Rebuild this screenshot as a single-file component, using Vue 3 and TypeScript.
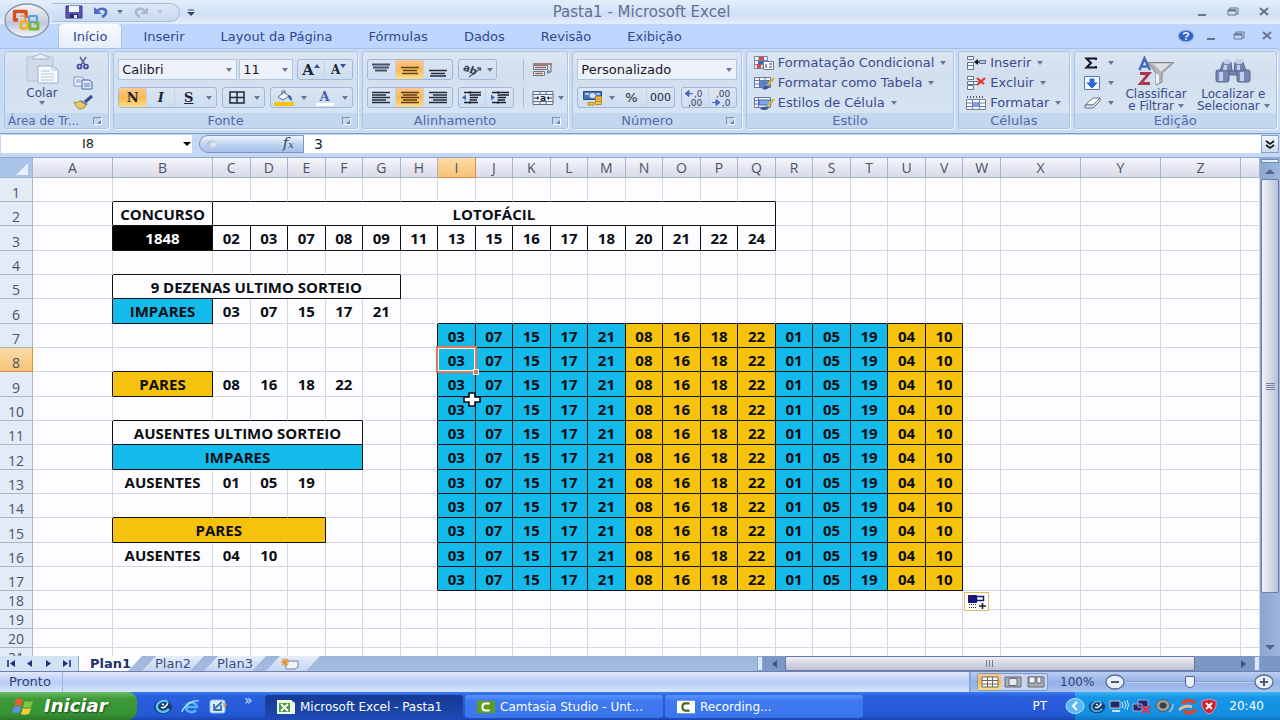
<script setup lang="ts">
import { ref } from 'vue'

interface Spec {
  text: string
  span?: number
  fill?: string
  boxed?: boolean
}
interface Cell extends Spec {
  col: number
  right: boolean
  bottom: boolean
}

const letters = 'ABCDEFGHIJKLMNOPQRSTUVWXYZ'.split('')
const lastCol = 26
const rowCount = 21
const specs = new Map<string, Spec>()
const put = (row: number, col: number, spec: Spec) => specs.set(`${row}:${col}`, spec)
const putList = (row: number, col: number, values: string, extra: Partial<Spec> = {}) =>
  values.split(' ').forEach((text, i) => put(row, col + i, { text, ...extra }))

put(2, 1, { text: 'CONCURSO', boxed: true })
put(2, 2, { text: 'LOTOFÁCIL', span: 15, boxed: true })
put(3, 1, { text: '1848', boxed: true, fill: 'black' })
putList(3, 2, '02 03 07 08 09 11 13 15 16 17 18 20 21 22 24', { boxed: true })
put(5, 1, { text: '9 DEZENAS ULTIMO SORTEIO', span: 6, boxed: true })
put(6, 1, { text: 'IMPARES', boxed: true, fill: 'cyan' })
putList(6, 2, '03 07 15 17 21')
put(9, 1, { text: 'PARES', boxed: true, fill: 'gold' })
putList(9, 2, '08 16 18 22')
put(11, 1, { text: 'AUSENTES ULTIMO SORTEIO', span: 5, boxed: true })
put(12, 1, { text: 'IMPARES', span: 5, boxed: true, fill: 'cyan' })
put(13, 1, { text: 'AUSENTES' })
putList(13, 2, '01 05 19')
put(15, 1, { text: 'PARES', span: 4, boxed: true, fill: 'gold' })
put(16, 1, { text: 'AUSENTES' })
putList(16, 2, '04 10')
for (let row = 7; row <= 17; row++) {
  putList(row, 8, '03 07 15 17 21', { boxed: true, fill: 'cyan' })
  putList(row, 13, '08 16 18 22', { boxed: true, fill: 'gold' })
  putList(row, 17, '01 05 19', { boxed: true, fill: 'cyan' })
  putList(row, 20, '04 10', { boxed: true, fill: 'gold' })
}

const boxedAt = new Set<string>()
specs.forEach((spec, key) => {
  if (!spec.boxed) return
  const [row, col] = key.split(':').map(Number)
  for (let i = 0; i < (spec.span ?? 1); i++) boxedAt.add(`${row}:${col + i}`)
})

const rows = Array.from({ length: rowCount }, (_, i) => {
  const row = i + 1
  const cells: Cell[] = []
  let col = 0
  while (col <= lastCol) {
    const spec = specs.get(`${row}:${col}`) ?? { text: '' }
    const span = spec.span ?? 1
    cells.push({
      ...spec,
      col,
      right: !!spec.boxed || boxedAt.has(`${row}:${col + span}`),
      bottom: !!spec.boxed || boxedAt.has(`${row + 1}:${col}`),
    })
    col += span
  }
  return { row, cells }
})

const tabs = ['Início', 'Inserir', 'Layout da Página', 'Fórmulas', 'Dados', 'Revisão', 'Exibição']
const nameBox = ref('I8')
const formula = ref('3')
const zoom = ref(50)
</script>

<template>
  <div class="window">
    <header class="titlebar">
      <button class="office" aria-label="Botão Office">
        <svg width="46" height="36" viewBox="0 0 46 36">
          <defs>
            <linearGradient id="orb" x1="0" y1="0" x2="0" y2="1">
              <stop offset="0" stop-color="#f4f6fa" /><stop offset=".5" stop-color="#c9d0df" />
              <stop offset=".55" stop-color="#bcc6d9" /><stop offset="1" stop-color="#f2f6fc" />
            </linearGradient>
          </defs>
          <ellipse cx="22" cy="17.500" rx="22" ry="16.500" fill="url(#orb)" stroke="#8794ad" stroke-width="1.300" />
          <g fill="none">
            <rect x="24" y="13" width="8" height="6" rx="1" stroke="#5aa0dc" stroke-width="2.200" />
            <path d="M13 17H9.500V8.500H21V15" stroke="#d9501c" stroke-width="3.400" stroke-linejoin="round" />
            <path d="M15 13h5v5" stroke="#f08a4a" stroke-width="1.600" />
            <rect x="16" y="18.500" width="7" height="7" rx="1" stroke="#f2b01e" stroke-width="2.600" />
            <path d="M25 20v6h8v-6h-4" stroke="#7cb83c" stroke-width="2.800" stroke-linejoin="round" />
          </g>
        </svg>
      </button>
      <div class="quick">
        <button aria-label="Salvar">
          <svg width="18" height="14" viewBox="0 0 18 14"><path d="M1 1h16v12H1z" fill="#5b54b8" stroke="#36367e" /><path d="M4 1h10v6H4z" fill="#f4f7ff" /><path d="M5 9h8v4H5z" fill="#2d2e66" /><path d="M9 10h3v3H9z" fill="#e8eaf8" /></svg>
        </button>
        <button aria-label="Desfazer">
          <svg width="16" height="13" viewBox="0 0 16 13"><path d="M4 5c4-4 10-2 9 2-.4 2-2 3-4 4" fill="none" stroke="#4a6cc4" stroke-width="2.600" /><path d="M1 1v7h8z" fill="#4a6cc4" /></svg>
        </button>
        <i class="dd"></i>
        <button aria-label="Refazer">
          <svg width="16" height="13" viewBox="0 0 16 13"><path d="M12 5C8 1 2 3 3 7c.4 2 2 3 4 4" fill="none" stroke="#a9b7d2" stroke-width="2.400" /><path d="M15 1v7H7z" fill="#a9b7d2" /></svg>
        </button>
        <i class="dd pale"></i>
      </div>
      <button class="custom" aria-label="Personalizar"><svg width="8" height="7" viewBox="0 0 8 7"><path d="M1 1h6" stroke="#36456b" /><path d="M0 3h8L4 7z" fill="#36456b" /></svg></button>
      <h1>Pasta1 - Microsoft Excel</h1>
      <div class="winbtns">
        <button aria-label="Minimizar"><svg width="12" height="12" viewBox="0 0 12 12"><path d="M2 9h8" stroke="#66748e" stroke-width="2" /></svg></button>
        <button aria-label="Restaurar"><svg width="12" height="12" viewBox="0 0 12 12"><path d="M3 4V2h8v6H9" fill="none" stroke="#66748e" /><path d="M1 4h8v5H1z" fill="none" stroke="#66748e" /><path d="M1 4.500h8" stroke="#66748e" stroke-width="2" /></svg></button>
        <button aria-label="Fechar"><svg width="12" height="12" viewBox="0 0 12 12"><path d="M2 2l8 7M10 2L2 9" stroke="#66748e" stroke-width="2" /></svg></button>
      </div>
    </header>

    <nav class="tabs">
      <button v-for="(tab, i) in tabs" :key="tab" :class="['tab', { on: i === 0 }]">{{ tab }}</button>
      <div class="winbtns doc">
        <button class="help" aria-label="Ajuda"><svg width="18" height="14" viewBox="0 0 18 14"><ellipse cx="9" cy="7" rx="8" ry="6" fill="#2f66cc" stroke="#a7bfe6" stroke-width="1.500" /><path d="M6.500 5.500c0-2.500 5-2.500 5 0 0 1.500-2.500 1.300-2.500 3M9 9.500V11" fill="none" stroke="#fff" stroke-width="1.500" /></svg></button>
        <button aria-label="Minimizar pasta"><svg width="12" height="12" viewBox="0 0 12 12"><path d="M2 9h8" stroke="#66748e" stroke-width="2" /></svg></button>
        <button aria-label="Restaurar pasta"><svg width="12" height="12" viewBox="0 0 12 12"><path d="M3 4V2h8v6H9" fill="none" stroke="#66748e" /><path d="M1 4h8v5H1z" fill="none" stroke="#66748e" /><path d="M1 4.500h8" stroke="#66748e" stroke-width="2" /></svg></button>
        <button aria-label="Fechar pasta"><svg width="12" height="12" viewBox="0 0 12 12"><path d="M2 2l8 7M10 2L2 9" stroke="#66748e" stroke-width="2" /></svg></button>
      </div>
    </nav>

    <section class="ribbon">
      <div class="group">
        <div class="body clip">
          <button class="big">
            <svg width="34" height="30" viewBox="0 0 34 30"><path d="M2 3h26v24H2z" fill="#cfdaea" stroke="#b4c2d9" /><path d="M8 5V2h4l2-2h3l2 2h4v3z" fill="#eef3fa" stroke="#a4b2ca" /><path d="M13 12h14l6 4v13H13z" fill="#f6f9fe" stroke="#9fb0cd" /><path d="M27 12v4h6M16 17h9M16 20h13M16 23h13M16 26h13" fill="none" stroke="#b5c3da" /></svg>
            <span>Colar</span><i class="dd"></i>
          </button>
          <div class="stack">
            <button aria-label="Recortar"><svg width="14" height="14" viewBox="0 0 14 14"><path d="M4 1l5 8M10 1L5 9" stroke="#5b6a92" stroke-width="1.600" /><circle cx="3.500" cy="10.500" r="2" fill="none" stroke="#3c479e" stroke-width="1.700" /><circle cx="10" cy="10.500" r="2" fill="none" stroke="#3c479e" stroke-width="1.700" /></svg></button>
            <button aria-label="Copiar"><svg width="20" height="14" viewBox="0 0 20 14"><path d="M1 1h7l3 2v7H1z" fill="#edf3fd" stroke="#7d93c2" /><path d="M3 4h5M3 6h5" stroke="#7d93c2" /><path d="M9 4h7l3 2v7H9z" fill="#dbe7fb" stroke="#4864ac" /><path d="M11 8h6M11 10h6" stroke="#5c7cc0" /></svg></button>
            <button aria-label="Pincel"><svg width="20" height="14" viewBox="0 0 20 14"><path d="M19 0l-7 6" stroke="#3e4886" stroke-width="3" /><path d="M8 4l7 4-3 2-6-3z" fill="#7680a8" /><path d="M1 6c3 1 4 0 6-1l6 4c-1 3-4 4-7 4-2-2-4-4-5-7z" fill="#e9cc68" stroke="#a58a35" /></svg></button>
          </div>
        </div>
        <footer class="left small">Área de Tr...<i class="launch"></i></footer>
      </div>

      <div class="group">
        <div class="body lines">
          <div class="line">
            <div class="joined">
              <label class="pick family"><select aria-label="Fonte"><option>Calibri</option></select><i class="dd"></i></label>
              <label class="pick size"><select aria-label="Tamanho da fonte"><option>11</option></select><i class="dd"></i></label>
            </div>
            <div class="box two">
              <button aria-label="Aumentar fonte"><b class="serif big-a">A</b><svg width="6" height="14" viewBox="0 0 6 14"><path d="M0 5h6L3 1z" fill="#3d4f98" /></svg></button>
              <button aria-label="Diminuir fonte"><b class="serif small-a">A</b><svg width="6" height="14" viewBox="0 0 6 14"><path d="M0 1h6L3 5z" fill="#3d4f98" /></svg></button>
            </div>
          </div>
          <div class="line">
            <div class="box style">
              <button class="serif lit"><b>N</b></button>
              <button class="serif"><em>I</em></button>
              <button class="serif"><u>S</u></button>
              <i class="dd"></i>
            </div>
            <div class="box pair narrow">
              <button aria-label="Bordas"><svg width="16" height="13" viewBox="0 0 16 13"><path d="M1 1h14v11H1zM8 1v11M1 6.500h14" fill="none" stroke="#20283c" stroke-width="1.500" /></svg></button>
              <i class="dd"></i>
            </div>
            <div class="box colors">
              <button aria-label="Cor de preenchimento"><svg width="20" height="16" viewBox="0 0 20 16"><path d="M4 7l6-5 5 4-6 4z" fill="#f1f5fd" stroke="#5a6c98" /><path d="M8 5V1h3v3" fill="none" stroke="#5a6c98" /><path d="M14 5c3 0 4 2 4 6-2-1-3-2-4-4z" fill="#4763a8" /><path d="M0 12h20v4H0z" fill="#f6c20c" /></svg></button>
              <i class="dd"></i>
              <button class="fontcolor" aria-label="Cor da fonte"><b class="serif">A</b></button>
              <i class="dd"></i>
            </div>
          </div>
        </div>
        <footer>Fonte<i class="launch"></i></footer>
      </div>

      <div class="group">
        <div class="body align">
          <div class="box">
            <button aria-label="Alinhar em cima"><svg width="18" height="14" viewBox="0 0 18 14"><path d="M0 1.500h18M1 4.500h16M3 7.500h12" stroke="#465068" stroke-width="2" /></svg></button>
            <button class="lit" aria-label="Alinhar no meio"><svg width="18" height="14" viewBox="0 0 18 14"><path d="M0 4.500h18M2 7.500h14M1 10.500h16" stroke="#5c4420" stroke-width="1.500" /></svg></button>
            <button aria-label="Alinhar embaixo"><svg width="18" height="14" viewBox="0 0 18 14"><path d="M0 7.500h18M2 10.500h14M1 13h16" stroke="#252c3e" stroke-width="1.500" /></svg></button>
          </div>
          <div class="box pair mid">
            <button aria-label="Orientação"><svg width="20" height="14" viewBox="0 0 20 14"><path d="M6 14L18 5M18 5h-4M18 5l-1 3" fill="none" stroke="#555f78" stroke-width="1.300" /><text x="0" y="9" font-size="10" font-weight="bold" fill="#333c52" transform="rotate(22 5 7)">ab</text></svg></button>
            <i class="dd"></i>
          </div>
          <button class="bare" aria-label="Quebrar texto"><svg width="20" height="15" viewBox="0 0 20 15"><path d="M.5 3.500h14v4H.5zM.5 9.500h11v4H.5z" fill="#f4f4f8" stroke="#6e7686" /><path d="M0 2h19M2 5.500h11M2 11.500h8" stroke="#9a5f50" stroke-width="1.300" /><path d="M18 3v7h-4M16 8l-2 2 2 2" fill="none" stroke="#566280" /></svg></button>
          <div class="box">
            <button aria-label="Alinhar à esquerda"><svg width="18" height="13" viewBox="0 0 18 13"><path d="M0 1.500h18M0 4h14M0 6.500h18M0 9h14M0 11.500h18" stroke="#252c3e" stroke-width="1.300" /></svg></button>
            <button class="lit" aria-label="Centralizar"><svg width="18" height="13" viewBox="0 0 18 13"><path d="M0 1.500h18M2 4h14M0 6.500h18M2 9h14M0 11.500h18" stroke="#5c3c18" stroke-width="1.300" /></svg></button>
            <button aria-label="Alinhar à direita"><svg width="18" height="13" viewBox="0 0 18 13"><path d="M0 1.500h18M4 4h14M0 6.500h18M4 9h14M0 11.500h18" stroke="#252c3e" stroke-width="1.300" /></svg></button>
          </div>
          <div class="box two">
            <button aria-label="Diminuir recuo"><svg width="20" height="13" viewBox="0 0 20 13"><path d="M2 1.500h17M8 4h11M8 6.500h8M8 9h7M2 11.500h14" stroke="#1c2130" stroke-width="1.500" /><path d="M8 0v13" stroke="#1c2130" stroke-dasharray="1 1" /><path d="M0 6.500l4-3v6z" fill="#4564c0" /></svg></button>
            <button aria-label="Aumentar recuo"><svg width="20" height="13" viewBox="0 0 20 13"><path d="M2 1.500h17M8 4h11M8 6.500h8M8 9h7M2 11.500h14" stroke="#1c2130" stroke-width="1.500" /><path d="M8 0v13" stroke="#1c2130" stroke-dasharray="1 1" /><path d="M5 6.500l-4-3v6z" fill="#4564c0" /></svg></button>
          </div>
          <div class="bare pair">
            <button aria-label="Mesclar e centralizar"><svg width="20" height="14" viewBox="0 0 20 14"><path d="M0 .5h20v13H0zM0 3.500h20M0 10.500h20M7 0v3M13 0v3M7 11v3M13 11v3" fill="#f2f5fb" stroke="#5f6a82" /><path d="M1 7h5M14 7h5" stroke="#20283c" /><path d="M6 7L4 5v4zM14 7l2-2v4z" fill="#20283c" /><text x="7" y="10" font-size="9" font-weight="bold" fill="#20283c">a</text></svg></button>
            <i class="dd"></i>
          </div>
        </div>
        <footer>Alinhamento<i class="launch"></i></footer>
      </div>

      <div class="group">
        <div class="body lines">
          <div class="line"><label class="pick format"><select aria-label="Formato de número"><option>Personalizado</option></select><i class="dd"></i></label></div>
          <div class="line">
            <div class="box numbers">
              <button aria-label="Moeda"><svg width="20" height="16" viewBox="0 0 20 16"><path d="M.5 1.500h18v8H.5z" fill="#4a72b8" stroke="#2c4a86" /><path d="M2 3h4v2H2zM13 3h4v2h-4z" fill="#a9c2ea" /><ellipse cx="9.500" cy="5.500" rx="3" ry="2.500" fill="#d8e6fb" /><path d="M5 12.500h6v2.500H5zM12.500 6.500h6v8h-6z" fill="#f0c850" stroke="#b88a24" /><path d="M13 9h6M13 11.500h6" stroke="#b88a24" /></svg></button>
              <i class="dd"></i>
              <button>%</button>
              <button class="zeros">000</button>
            </div>
            <div class="box two">
              <button aria-label="Aumentar casas decimais"><svg width="20" height="16" viewBox="0 0 20 16"><path d="M0 3.500l4-3v6zM4 3.500h4" fill="#4564c0" stroke="#4564c0" /><text x="9" y="7" font-size="9" fill="#39425c">,0</text><text x="3" y="16" font-size="9" fill="#39425c">,00</text></svg></button>
              <button aria-label="Diminuir casas decimais"><svg width="20" height="16" viewBox="0 0 20 16"><text x="4" y="7" font-size="9" fill="#39425c">,00</text><path d="M8 12.500l-4-3v6zM0 12.500h4" fill="#4564c0" stroke="#4564c0" /><text x="10" y="16" font-size="9" fill="#39425c">,0</text></svg></button>
            </div>
          </div>
        </div>
        <footer>Número<i class="launch"></i></footer>
      </div>

      <div class="group">
        <div class="body list">
          <button><svg width="20" height="16" viewBox="0 0 20 16"><path d="M.5 1.500h13v12H.5zM.5 5.500h13M.5 9.500h13M5 1v12M9 1v12" fill="#f4f7fd" stroke="#7383a6" /><path d="M5 2h5v3H5zM3 9h4v4H3z" fill="#d8443c" /><path d="M4 6h8v3H4z" fill="#3f68bc" /><path d="M9.500 6.500h10v8h-10z" fill="#fafbff" stroke="#707a92" /><path d="M12 9v4M15 9h3M15 12h3" stroke="#303a54" /></svg>Formatação Condicional<i class="dd"></i></button>
          <button><svg width="20" height="16" viewBox="0 0 20 16"><path d="M.5 2.500h16v10H.5zM.5 5.500h16M.5 9h16M5.500 2v10M11 2v10" fill="#f4f7fd" stroke="#63779f" /><path d="M6 6h10v6H6z" fill="#5583cc" /><path d="M20 3l-7 8" stroke="#d5b23e" stroke-width="2.500" /><path d="M8 14c2-3 4-4 7-3 0 3-3 4-7 3z" fill="#3858a0" /></svg>Formatar como Tabela<i class="dd"></i></button>
          <button><svg width="20" height="16" viewBox="0 0 20 16"><path d="M.5 2.500h16v10H.5zM.5 5.500h16M.5 9h16M4.500 2v10" fill="#f4f7fd" stroke="#63779f" /><path d="M5 5h12v5H5z" fill="#7fa9e6" stroke="#3f64ac" /><path d="M20 4l-7 8" stroke="#d5b23e" stroke-width="2.500" /><path d="M6 14c3-3 6-3 9-2 0 3-5 4-9 2z" fill="#3858a0" /></svg>Estilos de Célula<i class="dd"></i></button>
        </div>
        <footer>Estilo</footer>
      </div>

      <div class="group">
        <div class="body list">
          <button><svg width="20" height="14" viewBox="0 0 20 14"><path d="M1.500.5h6v3h-6zM1.500 6.500h6v3h-6zM1.500 9.500h6v4h-6z" fill="#f6f8fd" stroke="#66738e" /><path d="M9 6h4" stroke="#111" stroke-width="1.500" /><path d="M12 3v6L8 6z" fill="#111" /><path d="M13.500 4.500h6v3h-6z" fill="#b7c8ea" stroke="#5c6b98" /></svg>Inserir<i class="dd"></i></button>
          <button><svg width="20" height="14" viewBox="0 0 20 14"><path d="M1.500.5h6v3h-6zM1.500 5.500h6v3h-6zM1.500 9.500h6v4h-6zM7.500 5.500h5v3h-5z" fill="#f6f8fd" stroke="#66738e" /><path d="M11 2l7 6M19 2l-8 7" stroke="#e0372c" stroke-width="2.300" /></svg>Excluir<i class="dd"></i></button>
          <button><svg width="20" height="16" viewBox="0 0 20 16"><path d="M1 2h18" stroke="#4c5670" stroke-width="2" stroke-dasharray="1 2" /><path d="M.5 4.500h19v10H.5zM6.500 4v10M13.500 4v10M1 8h18M1 11.500h18" fill="#f6f8fd" stroke="#747f98" /><path d="M7 7h6v5H7z" fill="#7d9ee0" /></svg>Formatar<i class="dd"></i></button>
        </div>
        <footer>Células</footer>
      </div>

      <div class="group">
        <div class="body edit">
          <div class="list mini">
            <button aria-label="Soma"><svg width="14" height="12" viewBox="0 0 14 12"><path d="M12 3V1.500H2.500L7 6l-4.500 4.500H12V9" fill="none" stroke="#111728" stroke-width="2" /></svg><i class="dd"></i></button>
            <button aria-label="Preencher"><svg width="16" height="14" viewBox="0 0 16 14"><path d="M.5.5h15v13H.5z" fill="#f2f7ff" stroke="#5874ac" /><path d="M6 3h4v4h3l-5 5-5-5h3z" fill="#2e6ad4" stroke="#2e6ad4" /></svg><i class="dd"></i></button>
            <button aria-label="Limpar"><svg width="18" height="12" viewBox="0 0 18 12"><path d="M1 8l8-7h7l-7 7z" fill="#fbfcff" stroke="#66738e" /><path d="M1 8v3h8l7-7V1L9 8z" fill="#dfe6f2" stroke="#66738e" /></svg><i class="dd"></i></button>
          </div>
          <button class="big wide">
            <svg width="36" height="30" viewBox="0 0 36 30"><path d="M10 5.500h26L24 16v9l-6 3V16z" fill="#b4b4b9" stroke="#85858c" /><path d="M15 6.500h17l-9 8z" fill="#e0e0e5" /><path d="M18 16l3 2v8l-3 1z" fill="#f0f0f3" /><path d="M1.500 13L6.500 1.500 12 13M3 9.500h8" fill="none" stroke="#4a6cb8" stroke-width="2.600" /><path d="M2 16.500h9L2.500 26.500H12" fill="none" stroke="#a83a4c" stroke-width="2.800" /></svg>
            <span>Classificar<br>e Filtrar<i class="dd"></i></span>
          </button>
          <button class="big wide">
            <svg width="36" height="30" viewBox="0 0 36 30"><g fill="#7486b4" stroke="#566690"><path d="M8 5h8l1 9H5zM20 5h8l3 9H19z" /><path d="M14 14h8v4h-8z" /><rect x="1" y="13" width="13" height="12" rx="2" /><rect x="22" y="13" width="13" height="12" rx="2" /></g><g fill="#c3cfea"><ellipse cx="12" cy="4.500" rx="4" ry="2.500" /><ellipse cx="24" cy="4.500" rx="4" ry="2.500" /><path d="M4 15h4v9H4zM25 15h4v9h-4zM9 8h3v5H8zM22 8h3v5h-3z" /></g></svg>
            <span>Localizar e<br>Selecionar<i class="dd"></i></span>
          </button>
        </div>
        <footer>Edição</footer>
      </div>
    </section>

    <div class="formula">
      <label class="namebox"><input v-model="nameBox" aria-label="Caixa de nome"><i class="dd dark"></i></label>
      <button class="fx" aria-label="Inserir função"><span class="knob"></span><i class="fxt">f<small>x</small></i></button>
      <input v-model="formula" class="entry" aria-label="Barra de fórmulas">
      <button class="expand" aria-label="Expandir"><svg width="10" height="9" viewBox="0 0 10 9"><path d="M1 1l4 3 4-3M1 5l4 3 4-3" fill="none" stroke="#111" stroke-width="1.600" /></svg></button>
    </div>

    <main class="sheet">
      <div class="gridwrap">
        <table>
          <colgroup>
            <col class="c-head"><col class="c-a"><col class="c-b">
            <col v-for="n in 21" :key="n">
            <col class="c-a"><col class="c-a"><col class="c-a"><col class="c-end">
          </colgroup>
          <thead>
            <tr>
              <th class="corner"><svg width="12" height="12" viewBox="0 0 12 12"><path d="M12 0v12H0z" fill="#e9f0fb" /></svg></th>
              <th v-for="l in letters" :key="l" scope="col" :class="{ sel: l === 'I' }">{{ l }}</th>
              <th></th>
            </tr>
          </thead>
          <tbody>
            <tr v-for="r in rows" :key="r.row" :class="{ short: r.row > 17 }">
              <th scope="row" :class="{ sel: r.row === 8 }">{{ r.row }}</th>
              <td v-for="c in r.cells" :key="c.col" :colspan="c.span ?? 1" :class="[c.fill, { dr: c.right, db: c.bottom }]">
                {{ c.text }}
                <span v-if="r.row === 8 && c.col === 8" class="active"></span>
                <svg v-if="r.row === 10 && c.col === 8" class="pointer" width="18" height="15" viewBox="0 0 18 15"><path d="M6 1h6v4h5v5h-5v4H6v-4H1V5h5z" fill="#fff" stroke="#05080f" stroke-width="1.600" /></svg>
                <button v-if="r.row === 18 && c.col === 22" class="autofill" aria-label="Opções de autopreenchimento"><svg width="18" height="14" viewBox="0 0 18 14"><path d="M.5.500h8v7h-8z" fill="#15157c" stroke="#15157c" /><path d="M8.500 1.500h7v4h-7z" fill="#fff" stroke="#15157c" stroke-width="1.500" /><path d="M1 12.500h8M1 9.500h8" stroke="#333" stroke-dasharray="1 1" /><path d="M14.500 8v6M11 11h7" stroke="#222" stroke-width="1.600" /></svg></button>
              </td>
            </tr>
          </tbody>
        </table>
      </div>
      <div class="vscroll">
        <span class="split"></span>
        <button aria-label="Rolar para cima"><i class="tri up"></i></button>
        <span class="vthumb"><i></i></span>
        <span class="vrest"></span>
        <button aria-label="Rolar para baixo"><i class="tri down"></i></button>
      </div>
    </main>

    <div class="sheetbar">
      <div class="navs">
        <button aria-label="Primeira planilha"><svg width="9" height="7" viewBox="0 0 9 7"><path d="M1 0v7" stroke="#1f3478" stroke-width="1.600" /><path d="M8 0v7L3 3.500z" fill="#1f3478" /></svg></button>
        <button aria-label="Planilha anterior"><svg width="9" height="7" viewBox="0 0 9 7"><path d="M7 0v7L2 3.500z" fill="#1f3478" /></svg></button>
        <button aria-label="Próxima planilha"><svg width="9" height="7" viewBox="0 0 9 7"><path d="M2 0v7l5-3.500z" fill="#1f3478" /></svg></button>
        <button aria-label="Última planilha"><svg width="9" height="7" viewBox="0 0 9 7"><path d="M8 0v7" stroke="#1f3478" stroke-width="1.600" /><path d="M1 0v7l5-3.500z" fill="#1f3478" /></svg></button>
      </div>
      <button class="stab on">Plan1</button>
      <button class="stab">Plan2</button>
      <button class="stab">Plan3</button>
      <button class="stab new" aria-label="Inserir planilha"><svg width="18" height="12" viewBox="0 0 18 12"><path d="M5 3h12v6l-3 2H5z" fill="#eef2fb" stroke="#74809c" /><path d="M4 0v8M0 4h8M1 1l6 6M7 1L1 7" stroke="#e2963a" stroke-width="1.300" /></svg></button>
      <span class="fill"></span>
      <div class="hscroll">
        <span class="hsplit"></span>
        <button aria-label="Rolar para a esquerda"><i class="tri lft"></i></button>
        <span class="hthumb"><i></i></span>
        <span class="hrest"></span>
        <button aria-label="Rolar para a direita"><i class="tri rgt"></i></button>
        <span class="hsplit"></span>
      </div>
    </div>

    <footer class="status">
      <span class="ready">Pronto</span>
      <div class="zoomarea">
        <div class="views">
          <button class="lit" aria-label="Normal"><svg width="18" height="12" viewBox="0 0 18 12"><path d="M1 1h16v10H1zM1 4.500h16M1 8h16M6.500 1v10M11.500 1v10" fill="#fdfdf8" stroke="#6c6a60" /></svg></button>
          <button aria-label="Layout da página"><svg width="18" height="12" viewBox="0 0 18 12"><path d="M1 1h16v10H1z" fill="#a9abb4" stroke="#676a78" /><path d="M5 2.500h8v7H5z" fill="#e9ebf2" stroke="#676a78" /></svg></button>
          <button aria-label="Quebra de página"><svg width="18" height="12" viewBox="0 0 18 12"><path d="M1 1h16v10H1z" fill="#a9abb4" stroke="#676a78" /><path d="M2 1h6v6H2zM10 1h4v6h-4z" fill="#f4f5fa" stroke="#676a78" /></svg></button>
        </div>
        <span class="pct">100%</span>
        <button class="round" aria-label="Menos zoom"><svg width="20" height="16" viewBox="0 0 20 16"><ellipse cx="10" cy="8" rx="9" ry="7" fill="#e9effa" stroke="#5c6c90" stroke-width="1.300" /><path d="M6 8h8" stroke="#4c5a7c" stroke-width="2" /></svg></button>
        <input v-model="zoom" type="range" min="0" max="100" aria-label="Zoom">
        <button class="round" aria-label="Mais zoom"><svg width="20" height="16" viewBox="0 0 20 16"><ellipse cx="10" cy="8" rx="9" ry="7" fill="#e9effa" stroke="#5c6c90" stroke-width="1.300" /><path d="M6 8h8M10 4v8" stroke="#4c5a7c" stroke-width="2" /></svg></button>
      </div>
    </footer>

    <div class="taskbar">
      <button class="start">
        <svg width="24" height="18" viewBox="0 0 24 18"><path d="M4 3c3-2 5-1 7 0L9 9C7 8 5 8 2 9z" fill="#ee5a2c" /><path d="M13 4c3 1 5 1 8 0l-2 6c-3 1-5 1-8 0z" fill="#86c440" /><path d="M2 10c3-1 5-1 7 0l-2 6c-2-1-4-1-7 0z" fill="#5a92ee" /><path d="M11 11c3 1 5 1 8 0l-2 6c-3 1-5 1-8 0z" fill="#f8cc38" /></svg>
        Iniciar
      </button>
      <div class="launchers">
        <button aria-label="Mensageiro"><svg width="20" height="15" viewBox="0 0 20 15"><ellipse cx="10" cy="8" rx="9" ry="7" fill="#123f74" /><path d="M15 3C9 0 3 4 4 9c2 5 9 5 12 1" fill="none" stroke="#5cc0ee" stroke-width="2.400" /><path d="M8 8c2 2 5 0 7-4M9 5l2 1" stroke="#fff" stroke-width="1.500" fill="none" /></svg></button>
        <button aria-label="Internet Explorer"><svg width="20" height="15" viewBox="0 0 20 15"><path d="M15 11c-3 4-10 2-10-3s9-7 11 0H6" fill="none" stroke="#4fb4f4" stroke-width="2.600" /><path d="M1 13C2 8 12 0 18 2" fill="none" stroke="#a9e0fc" stroke-width="1.300" /></svg></button>
        <button aria-label="Área de trabalho"><svg width="20" height="15" viewBox="0 0 20 15"><rect x="1" y="1" width="15" height="13" rx="2" fill="#d8ecfc" stroke="#7fc0f0" /><path d="M5 10l8-7M5 5v6h7V6" fill="none" stroke="#3a72b4" stroke-width="1.800" /><path d="M14 4l4 1-3 4" fill="#e49a4a" /></svg></button>
        <span class="more">»</span>
      </div>
      <div class="tasks">
        <button class="task on"><svg width="18" height="14" viewBox="0 0 18 14"><path d="M0 0h14l4 3v11H0z" fill="#eef7e8" /><path d="M2 3h11v9H2z" fill="#4d9a48" /><path d="M4 4l7 7M11 4l-7 7" stroke="#fff" stroke-width="1.800" /></svg>Microsoft Excel - Pasta1</button>
        <button class="task"><svg width="18" height="14" viewBox="0 0 20 14"><path d="M0 0h20v14H0z" fill="#5f9c22" /><path d="M14 3H9c-4 0-4 8 0 8h5" fill="none" stroke="#fff" stroke-width="2.200" /></svg>Camtasia Studio - Unt...</button>
        <button class="task"><svg width="18" height="14" viewBox="0 0 20 14"><path d="M0 0h20v14H0z" fill="#fff" /><path d="M14 3H9c-4 0-4 8 0 8h5" fill="none" stroke="#466b16" stroke-width="2.400" /></svg>Recording...</button>
      </div>
      <span class="lang">PT</span>
      <div class="tray">
        <button class="hide" aria-label="Ocultar ícones"><svg width="20" height="16" viewBox="0 0 20 16"><ellipse cx="10" cy="8" rx="9" ry="7.500" fill="#5bb8f2" stroke="#b5e2fb" /><path d="M12 4L8 8l4 4" fill="none" stroke="#fff" stroke-width="2" /></svg></button>
        <svg width="18" height="15" viewBox="0 0 20 15"><ellipse cx="10" cy="8" rx="9" ry="7" fill="#123f74" /><path d="M15 3C9 0 3 4 4 9c2 5 9 5 12 1" fill="none" stroke="#4fb2e0" stroke-width="2" /><path d="M8 8c2 2 5 0 7-4M9 5l2 1" stroke="#fff" stroke-width="1.500" fill="none" /></svg>
        <svg width="20" height="15" viewBox="0 0 20 15"><path d="M1 2h10v7H1z" fill="#1c2a66" stroke="#c0c8dc" /><path d="M3 12h8" stroke="#d4d8e4" stroke-width="2" /><path d="M13 3q2 3 0 6M15.500 2q3 4 0 8M18 1q3 5 0 10" fill="none" stroke="#d4e8fa" /></svg>
        <svg width="20" height="15" viewBox="0 0 20 15"><path d="M6 1h10v7H6zM1 5h9v7H1z" fill="#26266e" stroke="#a4a9cc" /><path d="M10 7l8 7M18 7l-8 7" stroke="#e8304c" stroke-width="2.300" /></svg>
        <svg width="20" height="15" viewBox="0 0 20 15"><ellipse cx="8" cy="6.500" rx="7" ry="6" fill="#9a9ca2" stroke="#54565e" /><ellipse cx="8" cy="6.500" rx="3.500" ry="3" fill="#3c3e48" /><path d="M18 5q0 5-4 8" fill="none" stroke="#a8c4e0" stroke-width="1.500" /></svg>
        <svg width="20" height="15" viewBox="0 0 20 15"><path d="M17 4C13 0 6 1 5 5M6 12c4 3 9 2 12-1" fill="none" stroke="#e0452c" stroke-width="3.500" /><path d="M1 11c4-4 8-5 13-3" fill="none" stroke="#ecc090" stroke-width="2.600" /></svg>
        <svg width="18" height="15" viewBox="0 0 18 15"><path d="M9 0l7 2c1 6-2 11-7 13C4 13 1 8 2 2z" fill="#cf1f34" stroke="#f09098" /><path d="M6 4l6 6M12 4l-6 6" stroke="#fff" stroke-width="2" /></svg>
        <time>20:40</time>
      </div>
    </div>
  </div>
</template>

<style>
html, body { margin: 0; height: 100%; overflow: hidden; }
</style>

<style scoped>
.window { height: 100vh; display: flex; flex-direction: column; overflow: hidden; background: #bfd7fb; color: #3a4b8c; font: 13px/16px "DejaVu Sans", sans-serif; }
button, input, select { font: inherit; color: inherit; margin: 0; padding: 0; border: 0; background: none; box-sizing: border-box; }
button { display: flex; align-items: center; justify-content: center; white-space: nowrap; }
svg { flex: none; display: block; overflow: visible; }
svg text { font-family: "DejaVu Sans", sans-serif; }
.dd { flex: none; width: 0; height: 0; border: 3px solid transparent; border-top: 4px solid #66769c; border-bottom: 0; }
.dd.pale { border-top-color: #b2c0d8; }
.dd.dark { border-width: 4px; border-bottom-width: 0; border-top-color: #000; }

.titlebar { position: relative; height: 24px; flex: none; display: flex; align-items: center; background: linear-gradient(#e4effd, #cfe0f6 60%, #e3effc); }
.office { position: absolute; left: 5px; top: 3px; z-index: 2; }
.quick { margin-left: 52px; width: 128px; height: 19px; display: flex; align-items: center; gap: 10px; padding-left: 13px; box-sizing: border-box; border: 1px solid #a9bedd; border-left: 0; border-radius: 0 10px 10px 0; background: linear-gradient(#dde8f8, #c8d9f1); }
.quick button + .dd { margin-left: -2px; }
.custom { margin-left: 7px; }
h1 { flex: 1; margin: 0; text-align: center; font-size: 15px; font-weight: normal; line-height: 26px; color: #5f7092; }
.winbtns { display: flex; gap: 19px; padding-right: 10px; }
.titlebar .winbtns { width: 192px; box-sizing: border-box; justify-content: flex-end; }

.tabs { height: 24px; flex: none; display: flex; gap: 8px; background: #bfd7ff; padding-left: 59px; }
.tab { padding: 2px 14px 0; color: #33458f; }
.tab.on { background: linear-gradient(#f8fbff, #e6edf8); box-shadow: 0 0 0 1px #a9c1e8; border-radius: 4px 4px 0 0; }
.doc { margin-left: auto; padding-right: 7px; gap: 16px; }
.doc .help { margin-right: -6px; }

.ribbon { flex: none; height: 86px; box-sizing: border-box; padding: 2px 3px 4px 4px; display: grid; grid-template-columns: 105fr 244fr 206fr 169fr 208fr 111fr 203fr; grid-template-rows: minmax(0, 1fr); gap: 4px; background: #c9dcf5; border-top: 1px solid #a4bfe8; border-bottom: 1px solid #7f9fc0; border-radius: 0 4px 0 0; }
.group { min-width: 0; display: flex; flex-direction: column; border: 1px solid #adc3e0; border-radius: 3px; background: linear-gradient(#dde6f3, #d2dfef 30%, #d8e5f4); box-shadow: 1px 1px 0 #eef5fd; }
.group footer { position: relative; height: 15px; flex: none; display: flex; align-items: center; justify-content: center; padding-right: 20px; background: #c3d7ef; color: #5069a8; white-space: nowrap; }
.group footer.small { font-size: 12px; }
.group footer.left { justify-content: flex-start; padding-left: 3px; }
.group:nth-child(n + 5) footer { padding-right: 0; }
.launch { position: absolute; right: 6px; top: 4px; width: 7px; height: 6px; border: 1px solid #7f94bc; border-right-color: #fff; border-bottom-color: #fff; }
.launch::after { content: ""; position: absolute; right: 0; bottom: 0; border: 2px solid #6a80ae; border-top-color: transparent; border-left-color: transparent; }
.body { flex: 1; min-height: 0; box-sizing: border-box; }
.clip { display: flex; justify-content: space-between; padding: 2px 15px 0 20px; font-size: 12px; }
.big { flex-direction: column; justify-content: flex-start; line-height: 16px; }
.big svg { margin-bottom: 1px; }
.stack { display: flex; flex-direction: column; align-items: center; gap: 6px; padding-top: 2px; }
.lines { display: flex; flex-direction: column; gap: 7px; padding: 7px 4px 0; }
.line { display: flex; justify-content: space-between; }
.joined { display: flex; gap: 2px; }
.pick { height: 21px; box-sizing: border-box; display: flex; align-items: center; padding-right: 4px; background: #edf2fa; border: 1px solid #b3c6e0; color: #15182a; }
.pick select { appearance: none; flex: 1; min-width: 0; padding-left: 3px; outline: 0; }
.pick.family { width: 119px; }
.pick.size { width: 54px; }
.pick.format { flex: 1; }
.box { height: 21px; box-sizing: border-box; display: flex; align-items: stretch; border: 1px solid #a3b8d8; border-radius: 3px; background: linear-gradient(#dbe6f4, #cddcef); }
.box button { flex: 1; color: #1e2438; }
.box .dd { align-self: center; margin: 0 4px; }
.box button + button { border-left: 1px solid #c4d3e8; }
.box .lit, .views .lit { background: linear-gradient(#fbc890, #f9b850 50%, #fce08c); }
.line .two { width: 56px; }
.serif { font: bold 13px/18px "DejaVu Serif", serif; }
.big-a { font-size: 15px; }
.small-a { font-size: 12px; }
.style { width: 99px; }
.pair { align-items: center; }
.box.pair { align-items: stretch; }
.narrow { width: 43px; }
.colors { width: 83px; }
.fontcolor .serif { line-height: 13px; color: #4a5fa8; border-bottom: 3px solid #fff; padding: 0 4px; }
.align { display: grid; grid-template-columns: 86px 56px 1fr; gap: 7px 5px; padding: 7px 4px 0; align-content: start; }
.align .mid { width: 39px; }
.align .mid .dd { margin: 0 3px 0 0; align-self: center; }
.align > .bare { margin-left: 5px; padding-left: 9px; display: flex; justify-content: flex-start; gap: 5px; height: 21px; box-shadow: -1px 0 0 #a9bcd8; }
.numbers { width: 98px; }
.numbers .zeros { font-size: 11px; }
.numbers button { flex: 1 0 28px; }
.numbers .dd { margin: 0 2px; }
.list { display: flex; flex-direction: column; padding: 1px 6px 0 7px; }
.list button { height: 20px; flex: none; justify-content: flex-start; gap: 4px; }
.list .dd { margin-left: 2px; }
.edit { display: flex; font-size: 12px; padding: 0 4px; }
.mini { width: 34px; padding: 1px 0 0 5px; }
.mini button { justify-content: space-between; width: 30px; }
.wide { flex: 1; line-height: 12px; padding-top: 5px; }
.wide .dd { display: inline-block; margin: 0 0 2px 4px; }

.formula { flex: none; height: 24px; box-sizing: border-box; padding: 1px 1px 4px; display: flex; background: #c4d8f3; border-bottom: 1px solid #8fa6c8; }
.formula input { min-width: 0; background: transparent; outline: 0; color: #20222c; }
.namebox { width: 191px; display: flex; align-items: center; background: #fff; }
.namebox input { flex: 1; width: 0; text-align: center; padding-right: 8px; font-size: 13px; }
.namebox .dd { margin-right: 1px; }
.fx { width: 105px; margin-left: 7px; justify-content: space-between; padding: 0 9px 0 7px; border: 1px solid #7f96bd; border-radius: 10px 0 0 10px; background: linear-gradient(#eef4fc, #b9cff0 60%, #a9c2ea); }
.knob { width: 10px; height: 8px; border-radius: 50%; background: radial-gradient(circle at 65% 60%, #e6ecf6, #a5b2ca); }
.fxt { font: italic 15px/16px "DejaVu Serif", serif; color: #3c465c; }
.fxt small { font-size: 10px; }
.formula .entry { flex: 1; background: #fff; padding-left: 10px; font-size: 14px; }
.expand { width: 18px; border: 1px solid #8ba0c4; background: linear-gradient(#f2f6fc, #ccdaf0); }

.sheet { flex: 1; min-height: 0; display: flex; background: #fff; }
.gridwrap { flex: 1; min-width: 0; overflow: hidden; }
table { width: 100%; table-layout: fixed; border-collapse: separate; border-spacing: 0; font: bold 15px/18px "Open Sans", "Noto Sans", sans-serif; color: #0c0e14; }
.c-head { width: 33px; }
.c-a { width: 80px; }
.c-b { width: 100px; }
.c-end { width: 19px; }
th, td { box-sizing: border-box; padding: 0; text-align: center; vertical-align: middle; white-space: nowrap; border-right: 1px solid #d6d8e0; border-bottom: 1px solid #d6d8e0; }
th { font-weight: normal; font-size: 14px; color: #4a5468; }
thead th { height: 20px; line-height: 17px; background: linear-gradient(#f6f7fc, #e6e7f1 50%, #d9dbe9); border-color: #a9b3c8; }
thead .corner { background: #a9c4e9; text-align: right; }
.corner svg { margin: 2px 4px 0 auto; }
tbody th { background: #e3ebf7; border-color: #a9b6ce; vertical-align: bottom; line-height: 17px; }
thead th.sel, tbody th.sel { background: linear-gradient(#fbdca6, #f6c277); border-color: #d98f3c; }
tbody tr { height: 24px; }
tbody tr:nth-child(3n) { height: 25px; }
tbody tr.short { height: 19px; }
td { position: relative; background: #fdfdff; }
td.dr { border-right-color: #101216; }
td.db { border-bottom-color: #101216; }
td.cyan { background: #13baea; }
td.gold { background: #f6c20c; }
td.black { background: #000; color: #fff; }
.active { position: absolute; inset: -2px -2px -2px -2px; border: 2px solid #e0785a; outline: 1px solid #fff4ee; outline-offset: -3px; z-index: 1; }
.active::after { content: ""; position: absolute; right: -4px; bottom: -4px; width: 4px; height: 4px; background: #e0785a; border: 1px solid #fff; }
.pointer { position: absolute; left: 25px; top: -5px; z-index: 2; }
.autofill { position: absolute; left: 1px; top: 1px; width: 25px; height: 19px; background: #fff; border: 1px solid #e8b85c; z-index: 2; }

.vscroll { flex: none; width: 20px; box-sizing: border-box; display: flex; flex-direction: column; align-items: stretch; padding: 1px; background: linear-gradient(90deg, #8ba6d0, #9db6dc); }
.split { height: 4px; background: #e4eefb; border: 1px solid #6f8ab8; box-sizing: border-box; }
.vscroll button { height: 16px; }
.vthumb { flex: 0 1 414px; box-sizing: border-box; display: flex; align-items: center; justify-content: center; background: linear-gradient(90deg, #f1f4fa, #d5dbe8 50%, #b9c0d4); border: 1px solid #6a7fa8; border-radius: 2px; }
.vthumb i { width: 9px; height: 7px; background: repeating-linear-gradient(#7884a0 0 1px, transparent 1px 2px); }
.vrest { flex: 1; }
.tri { width: 0; height: 0; border: 5px solid transparent; }
.up { border-top: 0; border-bottom-color: #4d6592; }
.down { border-bottom: 0; border-top-color: #4d6592; }
.lft { border-left: 0; border-right: 5px solid #3f5684; border-top-width: 4px; border-bottom-width: 4px; }
.rgt { border-right: 0; border-left: 5px solid #3f5684; border-top-width: 4px; border-bottom-width: 4px; }

.sheetbar { flex: none; height: 16px; display: flex; background: linear-gradient(#9fb6dc, #a6bbe0); border-bottom: 1px solid #6c80b4; box-sizing: border-box; }
.navs { width: 79px; box-sizing: border-box; padding: 0 7px; display: flex; justify-content: space-between; background: #d4e2f6; border-right: 1px solid #8ba2c8; }
.stab { min-width: 62px; color: #3a4b86; background: linear-gradient(#e4edfa, #c6d7f2); clip-path: polygon(14px 0, 100% 0, calc(100% - 14px) 100%, 0 100%); }
.stab.on { min-width: 63px; background: #fdfdff; font-weight: bold; color: #23306a; clip-path: polygon(0 0, 100% 0, calc(100% - 14px) 100%, 0 100%); }
.stab.new { min-width: 54px; padding-right: 6px; }
.fill { flex: 1; }
.hscroll { flex: 0 1 523px; display: flex; box-sizing: border-box; padding-right: 20px; background: #7c97c6; }
.hsplit { width: 6px; background: #d8e8f8; border: 1px solid #8aa4cc; box-sizing: border-box; }
.hscroll button { width: 22px; }
.hthumb { flex: 410; box-sizing: border-box; border: 1px solid #6a78a4; border-radius: 2px; background: linear-gradient(#f2eff6, #d5d6e2 50%, #bfc2d2); display: flex; align-items: center; justify-content: center; }
.hthumb i { width: 9px; height: 7px; background: repeating-linear-gradient(90deg, #6f7890 0 1px, transparent 1px 3px); }
.hrest { flex: 37; }

.status { flex: none; height: 20px; display: flex; justify-content: space-between; background: linear-gradient(#e0e8fa, #b9cdf6 50%, #d6e4fb); color: #303e76; }
.ready { width: 63px; box-sizing: border-box; padding: 2px 0 0 9px; border-right: 1px solid #9fb3dc; }
.zoomarea { flex: 0 1 305px; display: flex; align-items: center; padding: 0 6px; box-sizing: border-box; border-left: 2px solid #8ba3d4; background: linear-gradient(#bccff3, #94b0e6 50%, #a9c3ee); }
.views { display: flex; height: 16px; border: 1px solid #7f98c8; border-radius: 2px; background: #c6d6f1; }
.views button { width: 23px; }
.pct { width: 34px; margin: 0 11px 0 12px; font-size: 12px; }
.zoomarea input { flex: 1; min-width: 0; appearance: none; height: 16px; margin: 0; background: linear-gradient(#6f87b8, #dbe6fa) center / 100% 2px no-repeat; }
.zoomarea input::-webkit-slider-thumb { appearance: none; width: 10px; height: 12px; background: #eaf0fb; border: 1px solid #55658c; border-radius: 1px 1px 5px 5px; }

.taskbar { flex: none; height: 28px; display: flex; align-items: stretch; background: linear-gradient(#3a7af0, #2a5fde 15%, #2457d4 85%, #1c44ae); color: #fff; font-size: 12px; overflow: hidden; }
.start { width: 137px; padding-left: 12px; gap: 8px; justify-content: flex-start; font: italic bold 18px/20px "DejaVu Sans", sans-serif; color: #fff; text-shadow: 1px 1px 2px #1c4a14; background: linear-gradient(#6cbc62, #3d9a38 25%, #389536 75%, #2b7a2a); border-radius: 0 9px 9px 0; }
.launchers { display: flex; align-items: center; gap: 8px; padding-left: 16px; width: 112px; }
.more { font-size: 14px; margin: -12px 0 0 7px; color: #cfe0ff; }
.tasks { flex: 1; display: flex; gap: 2px; padding: 3px 0 2px; }
.task { flex: 0 1 198px; justify-content: flex-start; gap: 5px; padding-left: 12px; border-radius: 3px; background: linear-gradient(#5a94fa, #3f7af0 25%, #3a74ea); overflow: hidden; }
.task.on { background: linear-gradient(#163a94, #1e48b0); }
.lang { align-self: center; margin-right: 28px; }
.tray { width: 205px; flex: none; display: flex; align-items: center; justify-content: space-between; padding-right: 16px; box-sizing: border-box; background: linear-gradient(#3ab4f4, #1596e6 20%, #1390e0 80%, #0f76c4); }
.hide { margin-left: -10px; }
.tray time { margin-left: 8px; }
</style>
